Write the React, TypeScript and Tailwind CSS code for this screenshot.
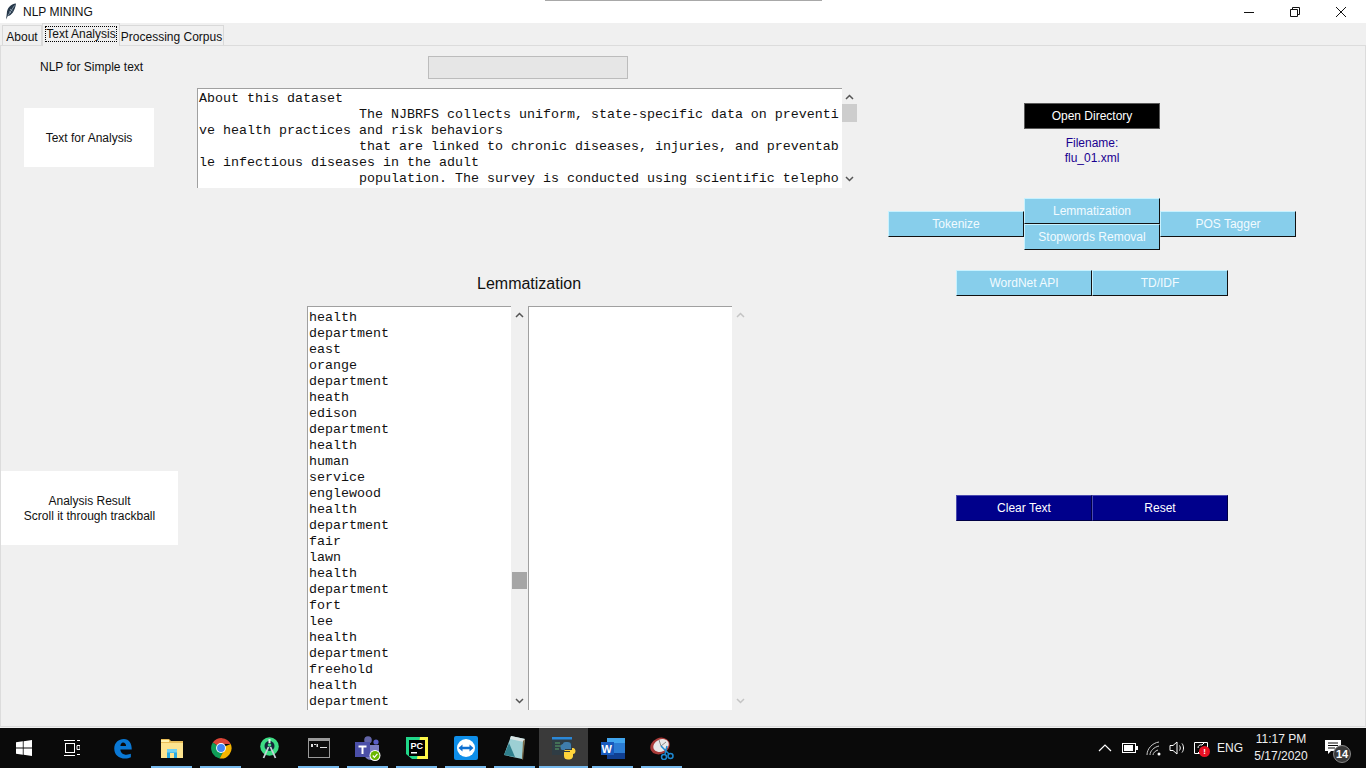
import { ReactNode } from 'react'

const textLines = [
  'About this dataset',
  '                    The NJBRFS collects uniform, state-specific data on preventi',
  've health practices and risk behaviors',
  '                    that are linked to chronic diseases, injuries, and preventab',
  'le infectious diseases in the adult',
  '                    population. The survey is conducted using scientific telepho',
]

const words = [
  'health', 'department', 'east', 'orange', 'department', 'heath', 'edison', 'department', 'health', 'human',
  'service', 'englewood', 'health', 'department', 'fair', 'lawn', 'health', 'department', 'fort', 'lee',
  'health', 'department', 'freehold', 'health', 'department',
]

const ui = 'font-["Liberation_Sans",Arial,sans-serif] text-[12px]'

function Chevron({ up, light }: { up?: boolean; light?: boolean }) {
  return (
    <svg width="9" height="6" viewBox="0 0 9 6" className={light ? 'text-[#c4c4c4]' : 'text-[#555555]'}>
      <path d={up ? 'M1 5 L4.5 1.5 L8 5' : 'M1 1 L4.5 4.5 L8 1'} fill="none" stroke="currentColor" strokeWidth="1.5" />
    </svg>
  )
}

function RaisedButton({ label, tone }: { label: string; tone: 'sky' | 'black' | 'navy' }) {
  const toneClass = {
    sky: 'bg-[#87ceeb] text-[#f2fbff] border-t-[#c8f2ff] border-l-[#c8f2ff] border-r-[#111111] border-b-[#111111]',
    black: 'bg-black text-white border-t-[#5a5a5a] border-l-[#5a5a5a] border-r-[#5a5a5a] border-b-[#5a5a5a]',
    navy: 'bg-[#00008b] text-white border-t-[#4a4ab0] border-l-[#4a4ab0] border-r-[#000045] border-b-[#000045]',
  }[tone]
  return (
    <div className={`flex h-[26px] w-[136px] items-center justify-center border ${toneClass}`}>
      {label}
    </div>
  )
}

function ScrollTrack({ light, w }: { light?: boolean; w: string }) {
  return (
    <div className={`flex h-full flex-col items-center justify-between py-[6px] ${w}`}>
      <Chevron up light={light} />
      <Chevron light={light} />
    </div>
  )
}

function WinLogo() {
  return (
    <svg width="16" height="16" viewBox="0 0 16 16" fill="#ffffff">
      <path d="M0 2.3 L6.8 1.3 V7.5 H0 Z M7.6 1.2 L16 0 V7.5 H7.6 Z M0 8.4 H6.8 V14.7 L0 13.7 Z M7.6 8.4 H16 V16 L7.6 14.8 Z" />
    </svg>
  )
}

function TaskView() {
  return (
    <svg width="16" height="16" viewBox="0 0 16 16" fill="none" stroke="#ffffff" strokeWidth="1">
      <path d="M0 0.5 H11 M0 15.5 H11" />
      <rect x="1.5" y="3.5" width="9" height="9" />
      <path d="M13 0.5 H16 M13 5.5 H16 V9.5 H13 Z M13 14.5 H16" />
    </svg>
  )
}

function Edge() {
  return (
    <svg width="20" height="21" viewBox="0 0 22 24">
      <path d="M1 12 C1 5 6 1 12 1 C18 1 21 6 21 13 H8 C8 16.5 11 19 15 19 C17 19 19 18.5 20 18 V22 C18 23 16 23.5 13.5 23.5 C6 23.5 1 19 1 12 Z M8 9 H14.5 C14.5 6.5 13 5 11 5 C9.5 5 8.3 6.5 8 9 Z" fill="#0a78d4" fillRule="evenodd" />
    </svg>
  )
}

function Folder() {
  return (
    <svg width="22" height="19" viewBox="0 0 22 19">
      <path d="M0 0 H8 L10 2 H22 V19 H0 Z" fill="#e8bd58" />
      <rect x="0" y="1" width="8" height="2" fill="#fff3b0" />
      <rect x="0" y="4" width="22" height="15" fill="#fde48f" />
      <path d="M6 10 H16 V19 H13 V14 H9 V19 H6 Z" fill="#29a8e0" />
      <rect x="6" y="10" width="10" height="3.5" fill="#6fd0f2" />
    </svg>
  )
}

function Chrome() {
  return (
    <svg width="22" height="22" viewBox="0 0 24 24">
      <path d="M12 12 L3 6 A11.5 11.5 0 0 1 22.6 7.5 H12 Z" fill="#db4437" />
      <path d="M12 12 L3 6 A11.5 11.5 0 0 0 10.5 23.4 L15 15 Z" fill="#0f9d58" />
      <path d="M12 12 L22.6 7.5 A11.5 11.5 0 0 1 10.5 23.4 L15 15 Z" fill="#f4b400" />
      <circle cx="12" cy="12" r="5.4" fill="#ffffff" />
      <circle cx="12" cy="12" r="4.3" fill="#4285f4" />
    </svg>
  )
}

function AndroidStudio() {
  return (
    <svg width="19" height="22" viewBox="0 0 19 22">
      <circle cx="9.5" cy="9.5" r="9.3" fill="#3ddc84" />
      <circle cx="9.5" cy="9" r="5" fill="#12263a" />
      <circle cx="9.5" cy="8" r="1.8" fill="#3ddc84" />
      <path d="M8.5 2 H10.5 V6 H8.5 Z" fill="#e8eaed" />
      <path d="M8.5 10 L3.5 21 M10.5 10 L15.5 21" stroke="#c8d2d8" strokeWidth="1.8" fill="none" />
    </svg>
  )
}

function Cmd() {
  return (
    <svg width="22" height="20" viewBox="0 0 22 20">
      <rect width="22" height="20" fill="#9a9a9a" />
      <rect x="1" y="3" width="20" height="16" fill="#0c0c0c" />
      <path d="M3 6 H5 V9 H3 Z M6 6 H8 V7 H6 Z M8.5 6 H10 V9 H8.5 Z M12 9 H19 V10 H12 Z" fill="#e0e0e0" />
    </svg>
  )
}

function Teams() {
  return (
    <svg width="26" height="25" viewBox="0 0 26 25">
      <circle cx="13" cy="4" r="3.8" fill="#6264a7" />
      <circle cx="21" cy="6" r="2.6" fill="#5b5fc7" />
      <path d="M9 9 H24 V18 C24 22 20 24 16 24 C12 24 9 21 9 17 Z" fill="#7b7dc2" />
      <rect x="0" y="6" width="15" height="15" fill="#4b4fa8" />
      <path d="M3.5 9.5 H11.5 V11.5 H8.5 V18 H6.5 V11.5 H3.5 Z" fill="#ffffff" />
      <circle cx="20" cy="19.5" r="5.5" fill="#ffffff" />
      <circle cx="20" cy="19.5" r="4.5" fill="#6bb700" />
      <path d="M17.8 19.5 L19.4 21.3 L22.4 17.9" stroke="#ffffff" strokeWidth="1.2" fill="none" />
    </svg>
  )
}

function PyCharm() {
  return (
    <svg width="22" height="22" viewBox="0 0 22 22">
      <path d="M0 0 H16 L22 5 V22 H6 L0 17 Z" fill="#21d789" />
      <path d="M14 0 H22 V22 H11 Z" fill="#fcf84a" />
      <rect x="3" y="3" width="16" height="16" fill="#000000" />
      <text x="4.5" y="11.5" fill="#ffffff" fontSize="9" fontWeight="700" fontFamily="Liberation Sans, sans-serif">PC</text>
      <rect x="5" y="15" width="6" height="1.5" fill="#ffffff" />
    </svg>
  )
}

function TeamViewer() {
  return (
    <svg width="24" height="24" viewBox="0 0 24 24">
      <rect width="24" height="24" rx="2" fill="#0e8ee9" />
      <circle cx="12" cy="12" r="9" fill="#ffffff" />
      <circle cx="12" cy="12" r="7.4" fill="#ffffff" />
      <path d="M4.5 12 L8.5 8.5 V10.8 H15.5 V8.5 L19.5 12 L15.5 15.5 V13.2 H8.5 V15.5 Z" fill="#0e6fd1" />
    </svg>
  )
}

function Notepad() {
  return (
    <svg width="23" height="26" viewBox="0 0 23 26">
      <path d="M8 1 L22 4 L19 24 L1 20 Z" fill="#9ccfd4" />
      <path d="M8 1 L22 4 L21 7 L7 4 Z" fill="#d8e4e4" />
      <path d="M6 8 L1 20 L12 22 Z" fill="#2f7f8c" />
      <path d="M20 6 L22 4 L20 25 L19 24 Z" fill="#7a6a48" />
    </svg>
  )
}

function PythonApp() {
  return (
    <svg width="24" height="23" viewBox="0 0 24 23">
      <rect x="0" y="0" width="20" height="18" fill="#2f3c44" />
      <rect x="0" y="0" width="20" height="2.5" fill="#2b88d8" />
      <path d="M3 6 H8 M3 9 H10 M3 12 H7" stroke="#5aa469" strokeWidth="1.2" />
      <path d="M11 7 C11 5 13 5 15.5 5 C18 5 19 6 19 8 V12 H13 V13 H10.5 C9 13 8.5 11.5 8.5 10 C8.5 8.5 9.5 7 11 7 Z" fill="#3f7cac" />
      <path d="M21 11 C22.5 11 23.5 12.5 23.5 14 C23.5 16 22.5 17 21 17 V19 C21 22 18 22.5 16 22.5 C13.5 22.5 12 21.5 12 19 V15 H18 V14 H12.5 V13 H20 V11 Z" fill="#ffd43b" />
    </svg>
  )
}

function Word() {
  return (
    <svg width="24" height="21" viewBox="0 0 24 21">
      <rect x="6" y="0" width="18" height="21" fill="#2b7cd3" />
      <rect x="6" y="0" width="18" height="5" fill="#41a5ee" />
      <rect x="6" y="15" width="18" height="6" fill="#103f91" />
      <rect x="0" y="4" width="13" height="13" fill="#185abd" />
      <text x="0.5" y="14.5" fill="#ffffff" fontSize="11" fontWeight="700" fontFamily="Liberation Sans, sans-serif">W</text>
    </svg>
  )
}

function Snip() {
  return (
    <svg width="24" height="23" viewBox="0 0 24 23">
      <ellipse cx="10" cy="9" rx="10" ry="8" fill="#a83a38" transform="rotate(-25 10 9)" />
      <ellipse cx="11" cy="8.5" rx="8" ry="6" fill="#e8e8e8" transform="rotate(-25 11 8.5)" />
      <path d="M11 9 L9 3 M11 9 L16 5" stroke="#888888" strokeWidth="1" />
      <path d="M11 9 L19 17 M17 9 L15 17" stroke="#1e88d0" strokeWidth="1.5" />
      <circle cx="20.5" cy="19" r="2.5" fill="none" stroke="#1e88d0" strokeWidth="1.5" />
      <circle cx="14" cy="20" r="2.5" fill="none" stroke="#1e88d0" strokeWidth="1.5" />
    </svg>
  )
}

const taskItems: { key: string; w: string; icon: ReactNode; open?: boolean; active?: boolean }[] = [
  { key: 'edge', w: 'w-[48px]', icon: <Edge /> },
  { key: 'files', w: 'w-[49px]', icon: <Folder />, open: true },
  { key: 'chrome', w: 'w-[49px]', icon: <Chrome />, open: true },
  { key: 'studio', w: 'w-[49px]', icon: <AndroidStudio /> },
  { key: 'cmd', w: 'w-[49px]', icon: <Cmd />, open: true },
  { key: 'teams', w: 'w-[49px]', icon: <Teams />, open: true },
  { key: 'pycharm', w: 'w-[49px]', icon: <PyCharm />, open: true },
  { key: 'viewer', w: 'w-[49px]', icon: <TeamViewer />, open: true },
  { key: 'notepad', w: 'w-[49px]', icon: <Notepad />, open: true },
  { key: 'python', w: 'w-[49px]', icon: <PythonApp />, open: true, active: true },
  { key: 'word', w: 'w-[49px]', icon: <Word />, open: true },
  { key: 'snip', w: 'w-[49px]', icon: <Snip />, open: true },
]

function Taskbar() {
  return (
    <div className="flex h-[40px] items-stretch bg-[#0a0a0a] text-white">
      <div className="flex w-[48px] items-center justify-center"><WinLogo /></div>
      <div className="flex w-[47px] items-center justify-center"><TaskView /></div>
      <div className="w-[4px]" />
      {taskItems.map(item => (
        <div key={item.key} className={`relative flex items-center justify-center ${item.w} ${item.active ? 'bg-[#3a3a3a]' : ''}`}>
          {item.icon}
          {item.open && <div className={`absolute bottom-0 h-[2px] bg-[#76b9ed] ${item.active ? 'left-0 right-0' : 'left-[4px] right-[4px]'}`} />}
        </div>
      ))}
      <div className="flex-1" />
      <div className="flex items-center font-['Liberation_Sans',Arial,sans-serif] text-[12px]">
        <svg width="14" height="8" viewBox="0 0 14 8" className="mr-[10px]">
          <path d="M1 7 L7 1 L13 7" fill="none" stroke="#ffffff" strokeWidth="1.2" />
        </svg>
        <svg width="16" height="10" viewBox="0 0 16 10" className="mr-[8px]">
          <rect x="0.5" y="0.5" width="13" height="9" fill="none" stroke="#ffffff" />
          <rect x="2" y="2" width="9" height="6" fill="#ffffff" />
          <rect x="14" y="3" width="2" height="4" fill="#ffffff" />
        </svg>
        <svg width="16" height="16" viewBox="0 0 16 16" className="mr-[7px]" fill="none" stroke="#cccccc" strokeWidth="1">
          <path d="M1 15 C1 9 6 3 13 2 M4 15 C4 11 8 7 13 6 M7 15 C7 13 9 11 12 10" />
          <circle cx="13" cy="14" r="1.5" fill="#ffffff" stroke="none" />
        </svg>
        <svg width="17" height="16" viewBox="0 0 17 16" className="mr-[7px]" fill="none" stroke="#ffffff" strokeWidth="1">
          <path d="M1 5.5 H4 L8 2 V14 L4 10.5 H1 Z M10.5 5.5 C11.5 7 11.5 9 10.5 10.5 M13 3.5 C15 6 15 10 13 12.5" />
        </svg>
        <div className="relative mr-[8px] h-[16px] w-[16px]">
          <svg width="16" height="16" viewBox="0 0 16 16" fill="none" stroke="#ffffff" strokeWidth="1">
            <path d="M1.5 2.5 H14.5 V13.5 H1.5 Z" />
            <path d="M5 8 C5 5.5 7 4.5 9 5 L11 3 M11 8 C11 10.5 9 11.5 7 11 L5 13" />
          </svg>
          <div className="absolute bottom-[-1px] right-[-1px] flex h-[11px] w-[11px] items-center justify-center rounded-full bg-[#e81123] text-[8px] font-bold leading-none">!</div>
        </div>
        <span className="mr-[10px] text-[#f0f0f0]">ENG</span>
        <div className="mr-[16px] flex w-[56px] flex-col items-center leading-[17px] text-[#f0f0f0]">
          <span>11:17 PM</span>
          <span>5/17/2020</span>
        </div>
        <div className="relative mr-[25px] h-[16px] w-[16px]">
          <svg width="16" height="14" viewBox="0 0 16 14">
            <path d="M0 0 H16 V11 H6 L3 14 V11 H0 Z" fill="#ffffff" />
            <path d="M3 3 H13 M3 5.5 H13 M3 8 H10" stroke="#0a0a0a" strokeWidth="1" />
          </svg>
          <div className="absolute left-[8px] top-[5px] flex h-[18px] w-[18px] items-center justify-center rounded-full border border-[#888888] bg-[#3a3a3a] text-[11px] font-bold leading-none">14</div>
        </div>
      </div>
    </div>
  )
}

function TitleBar() {
  return (
    <div className={`relative flex h-[23px] items-center bg-white ${ui}`}>
      <svg width="12" height="17" viewBox="0 0 12 17" className="ml-[5px]">
        <path d="M11 0.5 C5.5 1 2 5 1.8 10.5 L1 16.5 L2.8 13 C6.5 12.5 10 8 11 0.5 Z" fill="#26384a" />
        <path d="M9.5 2.5 L3 12.5 M5 6 L7.5 8 M4 8.5 L6 10" stroke="#a9bccc" strokeWidth="0.7" />
      </svg>
      <span className="ml-[6px] text-[#111111]">NLP MINING</span>
      <div className="absolute left-[545px] top-0 h-[1px] w-[277px] bg-[#a8a8a8]" />
      <div className="ml-auto mr-[2px] flex items-center">
        <svg width="46" height="12" viewBox="0 0 46 12"><path d="M18 6.5 H28" stroke="#111111" /></svg>
        <svg width="46" height="12" viewBox="0 0 46 12" fill="none" stroke="#111111"><path d="M20.5 3.5 V1.5 H27.5 V8.5 H25.5 M18.5 3.5 H25.5 V10.5 H18.5 Z" /></svg>
        <svg width="46" height="12" viewBox="0 0 46 12"><path d="M18 1 L28 11 M28 1 L18 11" stroke="#111111" /></svg>
      </div>
    </div>
  )
}

function Tabs() {
  return (
    <div className={`flex h-[22px] items-end bg-[#f0f0f0] pl-[2px] text-[#111111] ${ui}`}>
      <div className="flex h-[20px] w-[40px] items-center justify-center border border-b-0 border-[#d9d9d9] pt-[2px]">About</div>
      <div className="relative z-10 mb-[-1px] flex h-[23px] w-[78px] items-start justify-center border border-b-0 border-[#d9d9d9] bg-[#f0f0f0] pt-[2px]">
        <span className="whitespace-nowrap border border-dotted border-black leading-[14px]">Text Analysis</span>
      </div>
      <div className="flex h-[20px] w-[104px] items-center justify-center whitespace-nowrap border border-b-0 border-l-0 border-[#d9d9d9] pt-[2px]">Processing Corpus</div>
    </div>
  )
}

function LeftColumn() {
  return (
    <div className="flex w-[196px] flex-col">
      <div className="ml-[39px] mt-[14px] leading-[14px] text-[#111111]">NLP for Simple text</div>
      <div className="ml-[23px] mt-[34px] flex h-[59px] w-[130px] items-center justify-center bg-white text-[#111111]">Text for Analysis</div>
      <div className="mt-[304px] flex h-[74px] w-[177px] flex-col items-center justify-center bg-white pt-[2px] leading-[15px] text-[#111111]">
        <span>Analysis Result</span>
        <span>Scroll it through trackball</span>
      </div>
    </div>
  )
}

function CenterColumn() {
  return (
    <div className="flex w-[664px] flex-col">
      <div className="ml-[231px] mt-[10px] h-[23px] w-[200px] border border-[#bcbcbc] bg-[#e6e6e6]" />
      <div className="mt-[9px] flex h-[100px]">
        <div className="h-full w-[645px] overflow-hidden border-l border-t border-[#a0a0a0] bg-white pl-[1px] pt-[2px] font-['Liberation_Mono','Courier_New',monospace] text-[13.33px] leading-[16px] text-[#111111]">
          {textLines.map((line, i) => (
            <div key={i} className="whitespace-pre">{line}</div>
          ))}
        </div>
        <div className="relative flex w-[15px] flex-col items-center justify-between py-[6px]">
          <Chevron up />
          <div className="absolute left-0 top-[16px] h-[18px] w-[15px] bg-[#cdcdcd]" />
          <Chevron />
        </div>
      </div>
      <div className="ml-[280px] mt-[86px] font-['Liberation_Sans',Arial,sans-serif] text-[16px] leading-[20px] text-[#111111]">Lemmatization</div>
      <div className="ml-[110px] mt-[12px] flex h-[404px]">
        <div className="h-full w-[204px] overflow-hidden border-l border-t border-[#a0a0a0] bg-white pl-[1px] pt-[3px] font-['Liberation_Mono','Courier_New',monospace] text-[13.33px] leading-[16px] text-[#111111]">
          {words.map((word, i) => (
            <div key={i}>{word}</div>
          ))}
        </div>
        <div className="relative h-full">
          <ScrollTrack w="w-[17px]" />
          <div className="absolute left-[1px] top-[266px] h-[17px] w-[15px] bg-[#a6a6a6]" />
        </div>
        <div className="h-full w-[204px] border-l border-t border-[#a0a0a0] bg-white" />
        <ScrollTrack light w="w-[16px]" />
      </div>
    </div>
  )
}

function RightColumn() {
  return (
    <div className="flex flex-1 flex-col pl-[27px]">
      <div className="ml-[136px] mt-[57px]"><RaisedButton label="Open Directory" tone="black" /></div>
      <div className="ml-[136px] mt-[7px] flex w-[136px] flex-col items-center leading-[15px] text-[#1a0090]">
        <span>Filename:</span>
        <span>flu_01.xml</span>
      </div>
      <div className="mt-[32px] flex">
        <div className="pt-[13px]"><RaisedButton label="Tokenize" tone="sky" /></div>
        <div className="flex flex-col">
          <RaisedButton label="Lemmatization" tone="sky" />
          <RaisedButton label="Stopwords Removal" tone="sky" />
        </div>
        <div className="pt-[13px]"><RaisedButton label="POS Tagger" tone="sky" /></div>
      </div>
      <div className="ml-[68px] mt-[20px] flex">
        <RaisedButton label="WordNet API" tone="sky" />
        <RaisedButton label="TD/IDF" tone="sky" />
      </div>
      <div className="ml-[68px] mt-[199px] flex">
        <RaisedButton label="Clear Text" tone="navy" />
        <RaisedButton label="Reset" tone="navy" />
      </div>
    </div>
  )
}

export default function App() {
  return (
    <div className="flex h-[768px] w-[1366px] flex-col overflow-hidden bg-[#f0f0f0]">
      <TitleBar />
      <Tabs />
      <div className={`flex h-[682px] border-x border-y border-[#dcdcdc] bg-[#f0f0f0] ${ui}`}>
        <LeftColumn />
        <CenterColumn />
        <RightColumn />
      </div>
      <div className="h-[1px] bg-[#f0f0f0]" />
      <Taskbar />
    </div>
  )
}
